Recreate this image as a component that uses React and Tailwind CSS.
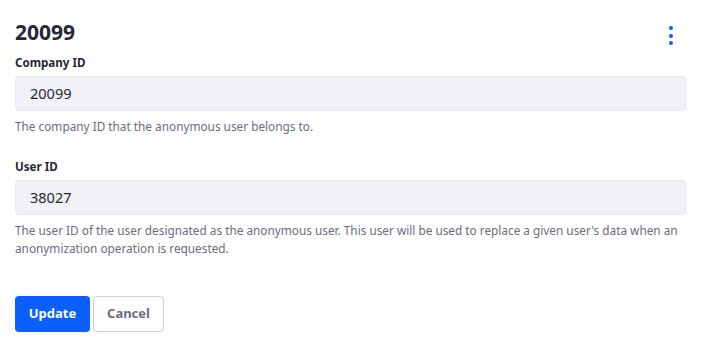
import React from "react";

const fields = [
  {
    label: "Company ID",
    value: "20099",
    help: "The company ID that the anonymous user belongs to.",
  },
  {
    label: "User ID",
    value: "38027",
    help: "The user ID of the user designated as the anonymous user. This user will be used to replace a given user's data when an anonymization operation is requested.",
  },
];

function Kebab() {
  return (
    <button className="mt-[7px] mr-[13px] flex flex-col items-center gap-[3.5px] p-0">
      <span className="block h-[4px] w-[4px] rounded-full bg-[#0b5fff]" />
      <span className="block h-[4px] w-[4px] rounded-full bg-[#0b5fff]" />
      <span className="block h-[4px] w-[4px] rounded-full bg-[#0b5fff]" />
    </button>
  );
}

export default function App() {
  return (
    <div
      className="w-[701px] h-[351px] bg-white px-[15px] pt-[19px] text-[#272833]"
      style={{ fontFamily: '"Noto Sans", "Open Sans", sans-serif' }}
    >
      <div className="flex items-start justify-between">
        <h2 className="text-[21px] font-bold leading-[26px]">20099</h2>
        <Kebab />
      </div>

      <div className="mt-[10px] flex flex-col gap-[24px]">
        {fields.map((f) => (
          <div key={f.label} className="flex flex-col">
            <label className="text-[11.6px] font-bold leading-[16px] mb-[5px]">{f.label}</label>
            <div className="h-[35px] w-[671px] rounded-[4px] border border-[#e7e7ed] bg-[#f1f2f5] px-[14px] flex items-center text-[14.5px] text-[#272833]">
              {f.value}
            </div>
            <p className="mt-[6px] text-[11.8px] leading-[18px] text-[#6b6c7e]">{f.help}</p>
          </div>
        ))}
      </div>

      <div className="mt-[39px] flex gap-[3px]">
        <button className="h-[36px] w-[75px] rounded-[4px] bg-[#0b5fff] text-[13px] font-bold text-white">
          Update
        </button>
        <button className="h-[36px] w-[71px] rounded-[4px] border border-[#cdced9] bg-white text-[13px] font-bold text-[#6b6c7e]">
          Cancel
        </button>
      </div>
    </div>
  );
}
